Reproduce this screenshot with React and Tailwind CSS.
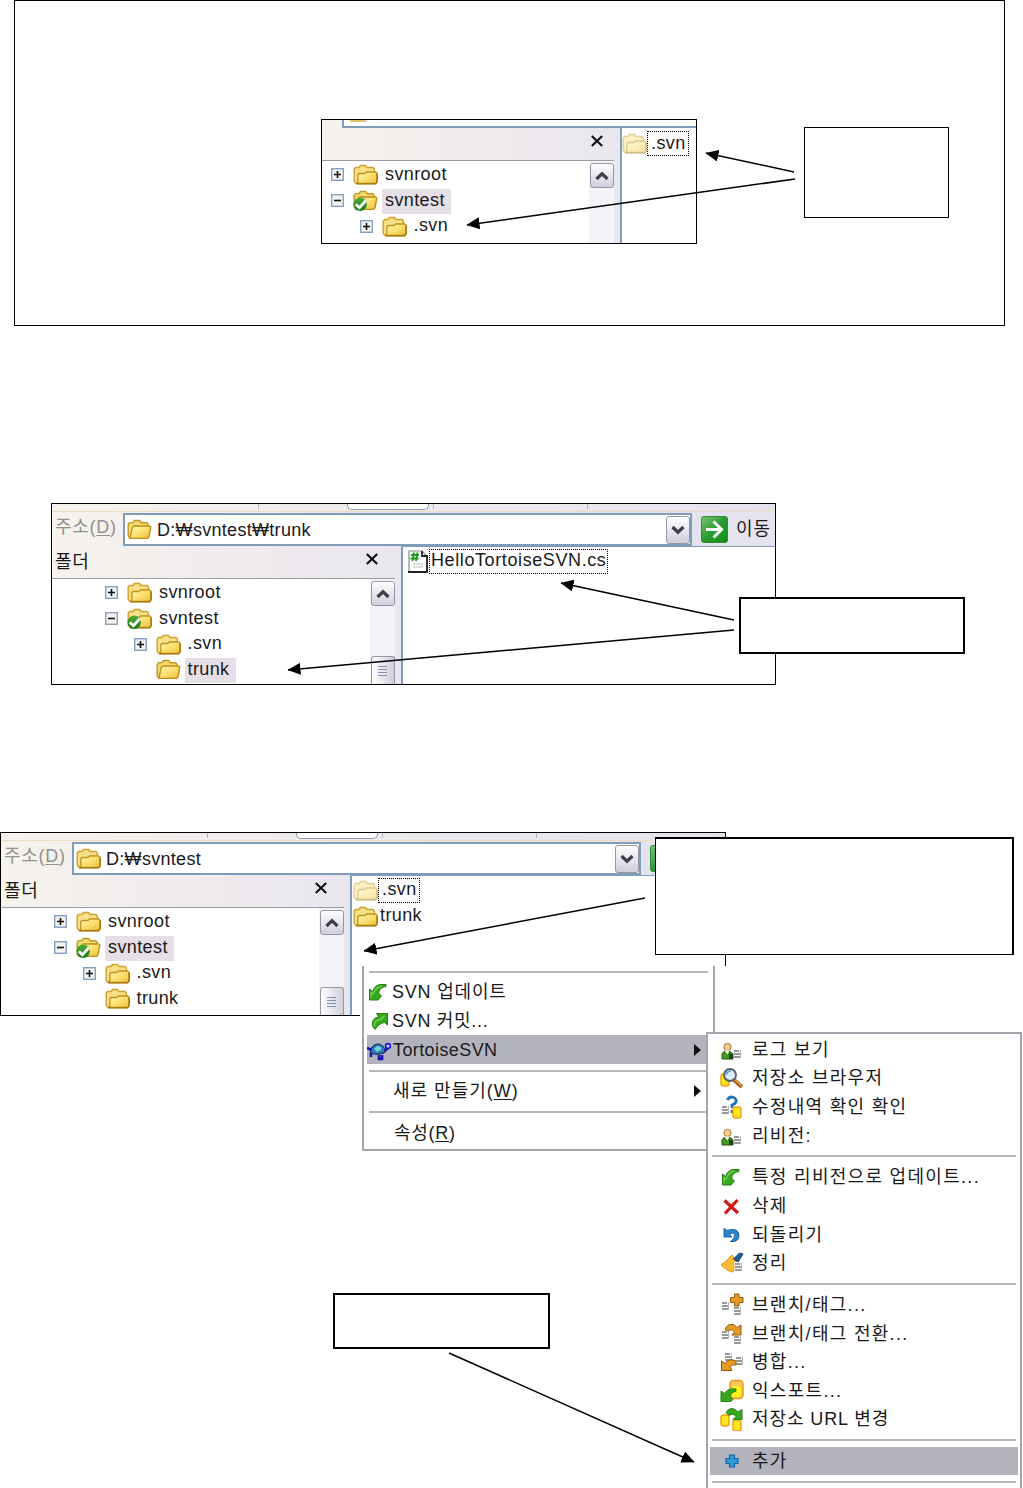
import React from 'react';

const FolderIcon = ({ open = false, faded = false, checked = false }) => (
  <svg viewBox="0 0 25 21" className={faded ? 'h-[21px] w-[25px] shrink-0 opacity-50' : 'h-[21px] w-[25px] shrink-0'}>
    <defs>
      <linearGradient id="folder-front" x1="0" y1="0" x2="1" y2="1">
        <stop offset="0" stopColor="#fff9b8" />
        <stop offset="0.5" stopColor="#fbe070" />
        <stop offset="1" stopColor="#efbd3c" />
      </linearGradient>
      <linearGradient id="folder-green" x1="0" y1="0" x2="0" y2="1">
        <stop offset="0" stopColor="#4fae3a" />
        <stop offset="1" stopColor="#157a12" />
      </linearGradient>
    </defs>
    {open ? (
      <>
        <path d="M1.2 17V5.5L2.6 3.6H6L7.5 1.5h5l2 2.2h5.2l1.2 1.5V8L20 19.2H3z" fill="#f5da72" stroke="#c29620" strokeWidth="1.4" />
        <path d="M3 19.2L5.2 8.6L7 7h15.6l1.2 1.2L22 18l-1.5 1.4z" fill="url(#folder-front)" stroke="#bd8f14" strokeWidth="1.4" />
      </>
    ) : (
      <>
        <path d="M1.2 17V5L2.6 3.5H6L7.5 1.5h5l1.5 2h6l1.4 1.5V19H2.5z" fill="#f8e08a" stroke="#cfa02a" strokeWidth="1.4" />
        <path d="M4.8 19.5V11l1.2-1.5h6L13.5 8h9.2L24 9.2V18l-1.4 1.5z" fill="url(#folder-front)" stroke="#c0921a" strokeWidth="1.3" />
        <path d="M3 19.8h19.6l1.6-2V9.5" fill="none" stroke="#a87a0c" strokeWidth="1.5" />
      </>
    )}
    {checked && (
      <>
        <circle cx="7.2" cy="14.2" r="6.7" fill="url(#folder-green)" />
        <path d="M2.8 14.2l3.6 3.6l6.4-7" fill="none" stroke="#fff" strokeWidth="2.8" />
      </>
    )}
  </svg>
);

const Expander = ({ state }) => (
  <svg viewBox="0 0 13 13" className="h-[13px] w-[13px] shrink-0">
    {state && (
      <>
        <rect x="0.7" y="0.7" width="11.6" height="11.6" fill="#f3f2ee" stroke="#86a3c3" strokeWidth="1.4" />
        <path d={state === 'plus' ? 'M3 6.5h7M6.5 3v7' : 'M3 6.5h7'} stroke="#111" strokeWidth="1.6" />
      </>
    )}
  </svg>
);

const TreeRow = ({ label, state, child, open, checked, selected }) => (
  <div className={child ? 'flex h-[25.7px] items-center pl-[28.5px]' : 'flex h-[25.7px] items-center'}>
    <div className="flex pt-[2px]">
      <Expander state={state} />
    </div>
    <div className="ml-[9px] mr-1 flex pt-0.5">
      <FolderIcon open={open} checked={checked} />
    </div>
    <span className={selected ? 'mt-[3px] h-[25px] bg-[#e6dfe8] pl-[3px] pr-[6px] leading-[23px]' : 'mt-[3px] h-[25px] px-[3px] leading-[23px]'}>
      {label}
    </span>
  </div>
);

const ArrowButton = ({ down = false }) => (
  <div className={down
    ? 'flex h-[28px] w-6 shrink-0 items-center justify-center rounded-[3px] border border-[#9496a8] bg-gradient-to-b from-white to-[#cfcfdd]'
    : 'flex h-[25px] w-6 shrink-0 items-center justify-center rounded-[3px] border border-[#9496a8] bg-gradient-to-b from-white to-[#cfcfdd]'}
  >
    <svg viewBox="0 0 14 10" className="h-[10px] w-[14px]">
      <path d={down ? 'M1.5 2l5.5 5.2L12.5 2' : 'M1.5 8L7 2.8L12.5 8'} fill="none" stroke="#3f4048" strokeWidth="3.2" />
    </svg>
  </div>
);

const CloseIcon = () => (
  <svg viewBox="0 0 12 12" className="h-3 w-3">
    <path d="M0.8 1l10.4 10M11.2 1L0.8 11" stroke="#111" strokeWidth="2.1" />
  </svg>
);

const FileItem = ({ label, focused, className, children }) => (
  <div className="flex h-[25.7px] items-center">
    {children}
    <div className={focused ? 'flex h-[25px] border border-dotted border-black' : 'flex h-[25px] border border-transparent'}>
      <span className={className}>{label}</span>
    </div>
  </div>
);

const ToolbarStrip = () => (
  <div className="flex h-[8px] shrink-0 border-b border-[#ecdcc4] bg-gradient-to-r from-[#f6f2ec] to-[#e5e2ee]">
    <div className="ml-[206px] h-[5px] w-px bg-[#b5b4b8]" />
    <div className="ml-[88px] h-[6px] w-[82px] rounded-b-[5px] border border-t-0 border-[#8d9cae] bg-white" />
    <div className="ml-1 h-[5px] w-px bg-[#b5b4b8]" />
    <div className="ml-[153px] h-[5px] w-px bg-[#b5b4b8]" />
  </div>
);

const AddressBar = ({ path, open }) => (
  <div className="flex h-[34px] shrink-0 items-start pt-px">
    <span className="w-[71px] pl-[3px] pt-[2px] leading-[24px] tracking-[0.7px] text-[#92918c]">
      주소(<u className="underline-offset-2">D</u>)
    </span>
    <div className="flex h-[33px] w-[569px] items-center border-2 border-[#7f9db9] bg-white pl-[2px]">
      <FolderIcon open={open} />
      <span className="ml-[5px] grow tracking-[0.3px]">{path}</span>
      <ArrowButton down />
    </div>
    <svg viewBox="0 0 27 27" className="ml-[9px] mt-[3px] h-[27px] w-[27px] shrink-0">
      <defs>
        <linearGradient id="go" x1="0" y1="0" x2="1" y2="1">
          <stop offset="0" stopColor="#7cc47c" />
          <stop offset="0.5" stopColor="#2a9c2f" />
          <stop offset="1" stopColor="#0d9310" />
        </linearGradient>
      </defs>
      <rect x="0.5" y="0.5" width="26" height="26" rx="2.5" fill="url(#go)" stroke="#2f8a33" />
      <path d="M5 13.5h15M12.5 5.5l8 8L12.5 21.5" fill="none" stroke="#fff" strokeWidth="3" />
    </svg>
    <span className="ml-[8px] pt-[3px] leading-[26px] tracking-[1px]">이동</span>
  </div>
);

const FolderPane = ({ title, closeClass, treeClass, thumb, children }) => (
  <>
    <div className={closeClass}>
      <span className="pt-[6px]">{title}</span>
      <CloseIcon />
    </div>
    <div className="mr-[6px] h-px shrink-0 bg-[#9c9ba3]" />
    <div className="mr-[6px] flex min-h-0 grow bg-white">
      <div className={treeClass}>{children}</div>
      <div className="flex w-[25px] flex-col items-center justify-between bg-[#f4f3f7] pt-[2px]">
        <ArrowButton />
        {thumb && (
          <div className="flex h-[28px] w-6 flex-col items-center justify-center gap-[2px] rounded-t-[3px] border border-b-0 border-[#9496a8] bg-gradient-to-r from-white to-[#cfcfdd]">
            <div className="h-px w-[9px] bg-[#8293b5]" />
            <div className="h-px w-[9px] bg-[#8293b5]" />
            <div className="h-px w-[9px] bg-[#8293b5]" />
            <div className="h-px w-[9px] bg-[#8293b5]" />
          </div>
        )}
      </div>
    </div>
  </>
);

const ExplorerWindow = ({ path, pathOpen, tree, files }) => (
  <div className="flex h-full flex-col overflow-hidden border border-black bg-gradient-to-r from-[#f6f2ec] to-[#e6e3f0] to-60%">
    <ToolbarStrip />
    <AddressBar path={path} open={pathOpen} />
    <div className="flex min-h-0 grow">
      <div className="flex w-[349px] shrink-0 flex-col">
        <FolderPane
          title="폴더"
          closeClass="flex h-[32px] shrink-0 items-center justify-between pl-[3px] pr-[23px] pb-[6px] tracking-[0.6px]"
          treeClass="grow pl-[53px]"
          thumb
        >
          {tree}
        </FolderPane>
      </div>
      <div className="grow border-l-2 border-t border-[#7f9db9] bg-white pl-[1px] pt-[2px]">{files}</div>
    </div>
  </div>
);

const CsFileIcon = () => (
  <svg viewBox="0 0 21 23" className="ml-1 h-[23px] w-[21px] shrink-0">
    <path d="M1 1h13l5 5v16H1z" fill="#fff" stroke="#888" strokeWidth="1.2" />
    <path d="M0 22h19V5M14 1v5h5" fill="none" stroke="#222" strokeWidth="1.8" />
    <path d="M6 2.5L4.5 11M9.5 2.5L8 11M3 5h8M2.5 8.5h8" stroke="#1c9a22" strokeWidth="1.8" />
    <path d="M5 14h10M5 17h10" stroke="#b9bcc0" />
  </svg>
);

/* menu icons, 24x24 */
const UpdateIcon = () => (
  <>
    <path d="M2.5 20V9l3 2.5Q8 4.500 14 4.500h5v2q-6 .5-7.500 6.500l3 3L11 20z" fill="#35a81f" stroke="#2b7d18" />
    <path d="M4 18.500v-6l2 1.500Q9 6.500 15 6" fill="none" stroke="#6fd14a" strokeWidth="1.3" />
  </>
);
const CommitIcon = () => (
  <>
    <path d="M9.500 4.500H20.500V16l-3-2.500q-6 1-9.500 7q-4-4-2.500-8q1.500-4 6-4.500z" fill="#35a81f" stroke="#2b7d18" />
    <path d="M7.500 17q-1-6 7-7l3-3" fill="none" stroke="#6fd14a" strokeWidth="1.5" />
  </>
);
const TortoiseIcon = () => (
  <>
    <path d="M0 10l4 2l2-2M4 19v-4l2-2M12 17v4h3v-4M15 15l6-5" fill="none" stroke="#1510c0" strokeWidth="2.6" />
    <path d="M3.500 15q0-8 7-9q6.500 0 8 8q-7 4-15 1z" fill="#2d7cb8" stroke="#101a50" />
    <path d="M7 11l3-3l4 1v3l-4 2z" fill="#6fd0dc" />
    <circle cx="21" cy="8" r="2.4" fill="#c3d4ff" stroke="#1510e0" strokeWidth="1.6" />
  </>
);
const Lines = ({ x, y }) => (
  <>
    <path d={`M${x} ${y}h5M${x} ${y + 3}h7M${x} ${y + 6}h7`} stroke="#777" strokeWidth="1.6" />
    <path d={`M${x + 6.5} ${y - 1}v8`} stroke="#b5b5b5" />
  </>
);
const LogIcon = () => (
  <>
    <path d="M2 21v-5q1-3 5-3t6 3v5z" fill="#3c9a1d" stroke="#2b5415" />
    <path d="M9 21v-6l4 2v4z" fill="#1f3f10" />
    <circle cx="7.5" cy="9" r="3.6" fill="#f6cf98" stroke="#a8752c" />
    <path d="M4.5 12.5l3 4l2-4z" fill="#fff" />
    <Lines x={14} y={13} />
  </>
);
const Db = ({ x, y, w = 8, h = 11 }) => (
  <rect x={x} y={y} width={w} height={h} rx="2.5" fill="#ffe81c" stroke="#f3a21b" strokeWidth="1.5" />
);
const BrowserIcon = () => (
  <>
    <Db x={1} y={8} w={8} h={12} />
    <circle cx="10" cy="9" r="6" fill="#d8ebf8" stroke="#555e68" strokeWidth="1.8" />
    <path d="M6 9q1-4 5-4" fill="none" stroke="#559fd8" strokeWidth="1.6" />
    <path d="M14 14l8 7" stroke="#9b6414" strokeWidth="4" />
    <path d="M15 14l7 6" stroke="#e4a83c" strokeWidth="1.5" />
  </>
);
const ChangesIcon = () => (
  <>
    <Lines x={2} y={12} />
    <path d="M7.5 5q1-3 4.5-3q5 1 4 5q-1 2-4 3v3M12 15v3" fill="none" stroke="#1c72b8" strokeWidth="2.8" />
    <Db x={13} y={12} />
  </>
);
const DeleteIcon = () => <path d="M4.5 6.5L18 19M17.5 6L5 19.5" stroke="#d01818" strokeWidth="3.2" />;
const RevertIcon = () => (
  <path d="M4 5.5v8.500h8l-2.500-2.500q4-3 5 0q1 4-4 7q8.500 1 8.500-6.500q-1-8-12-4.500z" fill="#2b84cc" stroke="#1b62a8" />
);
const CleanupIcon = () => (
  <>
    <path d="M1 14L6 10l6-6l5 6l-4 11q-5 0-12-7z" fill="#fbb934" stroke="#e09a1c" />
    <path d="M13.500 8l6-6l3.500 1l-5 8z" fill="#1e5e9c" stroke="#153f70" />
    <path d="M14 11h8v10h-7z" fill="#fff" />
    <Lines x={15} y={13} />
  </>
);
const BranchIcon = () => (
  <>
    <Lines x={2} y={10} />
    <Lines x={14} y={15} />
    <path d="M14.500 1h4.500v3.500h4v5h-4V13h-4.500V9.500h-4v-5h4z" fill="#e59a24" stroke="#935b0c" />
  </>
);
const SwitchIcon = () => (
  <>
    <Lines x={2} y={10} />
    <Lines x={14} y={15} />
    <path d="M5 7.5q2-6 9-5l3 3l4-2.500v10h-9l2.500-3q-2.500-4-6.500-1z" fill="#e59a24" stroke="#935b0c" />
  </>
);
const MergeIcon = () => (
  <>
    <Lines x={5} y={4} />
    <Lines x={16} y={8} />
    <path d="M1.5 20.5V11l3.500 2.500q4-6 11-2.500v4q-4-1-6 2l2 3.500z" fill="#e59a24" stroke="#935b0c" />
  </>
);
const ExportIcon = () => (
  <>
    <rect x="10" y="1.5" width="13" height="18" rx="3.5" fill="#ffc765" stroke="#f3951b" strokeWidth="1.5" />
    <rect x="12" y="7" width="9" height="11" rx="2" fill="#fff01c" />
    <path d="M1 22.5V12l3.500 2.500q4-6 11.500-4.500v2q-5 1-6 5l3 3.500l-2 2z" fill="#35a81f" stroke="#2b7d18" />
  </>
);
const RelocateIcon = () => (
  <>
    <Db x={1} y={8} />
    <Db x={13} y={13} />
    <path d="M6 5.5q4-6 9-3l3 2.500l4-2.500v10h-9l3-3q-2.500-4-7-1z" fill="#35a81f" stroke="#2b7d18" />
  </>
);
const AddIcon = () => (
  <path d="M9.500 6h5v3.500H18v5h-3.500V18h-5v-3.500H6v-5h3.500z" fill="#2f9ad6" stroke="#13649f" strokeWidth="1.2" />
);

const MenuIcon = ({ children }) => (
  <svg viewBox="0 0 24 24" className="h-6 w-6 shrink-0">
    {children}
  </svg>
);

const MenuRow = ({ icon, label, active, submenu, className }) => (
  <div className={active ? 'flex h-[28.6px] shrink-0 items-center bg-[#b3b3bd]' : 'flex h-[28.6px] shrink-0 items-center'}>
    <MenuIcon>{icon}</MenuIcon>
    <span className={className}>{label}</span>
    {submenu && (
      <svg viewBox="0 0 7 12" className="ml-auto mr-[9px] h-3 w-[7px]">
        <path d="M0 0l7 6l-7 6z" fill="#111" />
      </svg>
    )}
  </div>
);

const Separator = () => (
  <div className="flex h-[13.2px] shrink-0 items-center px-[2px]">
    <div className="h-[2px] w-full bg-[#b6b6be]" />
  </div>
);

const submenuGroups = [
  [
    [<LogIcon />, '로그 보기'],
    [<BrowserIcon />, '저장소 브라우저'],
    [<ChangesIcon />, '수정내역 확인 확인'],
    [<LogIcon />, '리비전:'],
  ],
  [
    [<UpdateIcon />, '특정 리비전으로 업데이트...'],
    [<DeleteIcon />, '삭제'],
    [<RevertIcon />, '되돌리기'],
    [<CleanupIcon />, '정리'],
  ],
  [
    [<BranchIcon />, '브랜치/태그...'],
    [<SwitchIcon />, '브랜치/태그 전환...'],
    [<MergeIcon />, '병합...'],
    [<ExportIcon />, '익스포트...'],
    [<RelocateIcon />, '저장소 URL 변경'],
  ],
];

const ContextMenu = () => (
  <div className="absolute left-[360px] top-[966px] h-[186px] w-[372px] bg-white pl-[2px]">
    <div className="flex h-[185px] w-[353px] flex-col border-2 border-t-0 border-[#a5a5b0] px-[3px]">
      <div className="-mt-[1px]">
        <Separator />
      </div>
      <MenuRow icon={<UpdateIcon />} label="SVN 업데이트" className="ml-px tracking-[0.8px]" />
      <MenuRow icon={<CommitIcon />} label="SVN 커밋..." className="ml-px tracking-[0.7px]" />
      <MenuRow icon={<TortoiseIcon />} label="TortoiseSVN" active submenu className="ml-[2px]" />
      <Separator />
      <MenuRow
        label={<>새로 만들기(<u className="underline-offset-2">W</u>)</>}
        submenu
        className="ml-[2px] tracking-[1px]"
      />
      <Separator />
      <MenuRow label={<>속성(<u className="underline-offset-2">R</u>)</>} className="ml-[3px] tracking-[0.7px]" />
    </div>
  </div>
);

const TortoiseMenu = () => (
  <div className="absolute left-[706px] top-[1032px] flex h-[470px] w-[316px] flex-col border-2 border-[#a5a5b0] bg-white px-[2px] pt-[1.5px]">
    {submenuGroups.map((group, i) => (
      <React.Fragment key={i}>
        {group.map(([icon, label], j) => (
          <div key={j} className="pl-[10px]">
            <MenuRow
              icon={icon}
              label={label}
              className={label.includes('URL') ? 'ml-[8px] tracking-[0.9px]' : 'ml-[8px] tracking-[1.3px]'}
            />
          </div>
        ))}
        <Separator />
      </React.Fragment>
    ))}
    <div className="bg-[#b3b3bd] pl-[10px]">
      <MenuRow icon={<AddIcon />} label="추가" className="ml-[8px] tracking-[1.3px]" />
    </div>
    <Separator />
  </div>
);

const arrows = [
  [794, 172, 706, 153],
  [795, 179, 467, 225],
  [734, 620, 561, 583],
  [734, 630, 288, 670],
  [645, 898, 364, 951],
  [449, 1353, 694, 1462],
];

const Arrows = () => (
  <svg viewBox="0 0 1023 1488" className="pointer-events-none absolute left-0 top-0 h-[1488px] w-[1023px]">
    <defs>
      <marker id="head" markerUnits="userSpaceOnUse" markerWidth="13" markerHeight="12" refX="12.5" refY="6" orient="auto">
        <path d="M0 0l13 6l-13 6z" />
      </marker>
    </defs>
    {arrows.map(([x1, y1, x2, y2]) => (
      <line key={y1} x1={x1} y1={y1} x2={x2} y2={y2} stroke="#000" strokeWidth="1.5" markerEnd="url(#head)" />
    ))}
  </svg>
);

export default function App() {
  return (
    <main className="relative h-[1488px] w-[1023px] overflow-hidden whitespace-nowrap bg-white font-['Liberation_Sans','Noto_Sans_CJK_KR',sans-serif] text-[18px] leading-6 tracking-[0.4px] text-[#1a1a1a]">
      <section className="ml-[14px] h-[326px] w-[991px] border border-black pl-[306px] pt-[118px]">
        <div className="flex h-[125px] w-[376px] flex-col overflow-hidden border border-black bg-gradient-to-r from-[#f6f2ec] to-[#e6e3f0]">
          <div className="ml-5 h-[8px] shrink-0 border-b-2 border-l-2 border-[#7f9db9] bg-white pl-[6px]">
            <div className="h-[2px] w-4 bg-[#e3c468]" />
          </div>
          <div className="flex min-h-0 grow">
            <div className="flex w-[298px] shrink-0 flex-col">
              <FolderPane
                closeClass="flex h-[32px] shrink-0 items-center justify-between pr-[17px] pb-[6px]"
                treeClass="grow pl-[9px]"
              >
                <TreeRow label="svnroot" state="plus" />
                <TreeRow label="svntest" state="minus" open checked selected />
                <TreeRow label=".svn" state="plus" child />
              </FolderPane>
            </div>
            <div className="grow border-l-2 border-[#7f9db9] bg-white pt-[3px]">
              <FileItem label=".svn" focused className="pl-[3px] pr-[2px] leading-[22px]">
                <FolderIcon faded />
              </FileItem>
            </div>
          </div>
        </div>
      </section>

      <section className="ml-[51px] mt-[177px] h-[182px] w-[725px]">
        <ExplorerWindow
          path="D:₩svntest₩trunk"
          pathOpen
          tree={
            <>
              <TreeRow label="svnroot" state="plus" />
              <TreeRow label="svntest" state="minus" checked />
              <TreeRow label=".svn" state="plus" child />
              <TreeRow label="trunk" child open selected />
            </>
          }
          files={
            <FileItem label="HelloTortoiseSVN.cs" focused className="px-px leading-[21px] tracking-[0.6px]">
              <CsFileIcon />
            </FileItem>
          }
        />
      </section>

      <section className="mt-[147px] h-[184px] w-[726px]">
        <ExplorerWindow
          path="D:₩svntest"
          tree={
            <>
              <TreeRow label="svnroot" state="plus" />
              <TreeRow label="svntest" state="minus" open checked selected />
              <TreeRow label=".svn" state="plus" child />
              <TreeRow label="trunk" child />
            </>
          }
          files={
            <>
              <FileItem label=".svn" focused className="pl-[3px] pr-[2px] leading-[21px]">
                <FolderIcon faded />
              </FileItem>
              <FileItem label="trunk" className="pl-px leading-[21px]">
                <FolderIcon />
              </FileItem>
            </>
          }
        />
      </section>

      <ContextMenu />
      <TortoiseMenu />

      {/* callouts */}
      <div className="absolute left-[804px] top-[127px] h-[91px] w-[145px] border border-black bg-white" />
      <div className="absolute left-[739px] top-[597px] h-[57px] w-[226px] border-2 border-black bg-white" />
      <div className="absolute left-[655px] top-[837px] h-[118px] w-[359px] border-2 border-b border-l border-black bg-white" />
      <div className="absolute left-[333px] top-[1293px] h-[56px] w-[217px] border-2 border-black bg-white" />
      <Arrows />
    </main>
  );
}
